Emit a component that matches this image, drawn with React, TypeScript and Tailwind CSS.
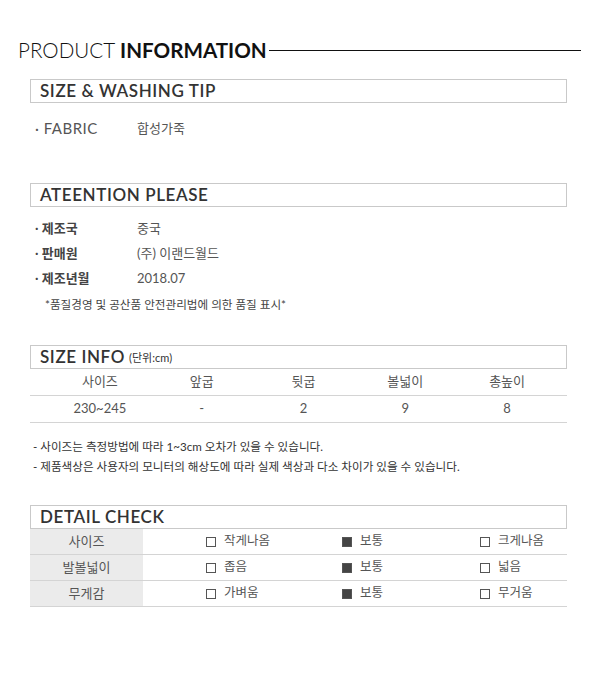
import React from "react";

const font = { fontFamily: 'Lato, "Noto Sans CJK KR", sans-serif' };

function BoxTitle({ children, className = "" }: { children: React.ReactNode; className?: string }) {
  return (
    <div className={"h-[24px] border border-[#c9c9c9] pl-[9px] flex items-center text-[17px] font-semibold text-[#333] tracking-[0.6px] " + className}>
      {children}
    </div>
  );
}

function Check({ on }: { on?: boolean }) {
  return (
    <span className={"inline-block w-[10px] h-[10px] border border-[#555] " + (on ? "bg-[#444]" : "bg-white")} />
  );
}

export default function App() {
  const detail = [
    { label: "사이즈", opts: ["작게나옴", "보통", "크게나옴"] },
    { label: "발볼넓이", opts: ["좁음", "보통", "넓음"] },
    { label: "무게감", opts: ["가벼움", "보통", "무거움"] },
  ];
  return (
    <div className="w-[600px] h-[676px] bg-white" style={font}>
      <div className="pt-[38px] flex items-center pl-[18px] pr-[19px] h-[62px]">
        <div className="text-[20.6px] leading-[24px] text-[#111] tracking-[0px] whitespace-nowrap">
          <span className="font-light">PRODUCT </span>
          <span className="font-bold">INFORMATION</span>
        </div>
        <div className="flex-1 h-px bg-[#111] ml-[2px]" />
      </div>

      <div className="pl-[30px] pr-[33px]">
        <BoxTitle className="mt-[17px]">SIZE &amp; WASHING TIP</BoxTitle>
        <div className="mt-[13px] h-[25px] flex items-center text-[#555]">
          <div className="w-[107px] pl-[5px] text-[15px] tracking-[0.5px]">· FABRIC</div>
          <div className="text-[13px]">합성가죽</div>
        </div>

        <BoxTitle className="mt-[42px]">ATEENTION PLEASE</BoxTitle>
        <div className="mt-[9px]">
          {[
            ["제조국", "중국"],
            ["판매원", "(주) 이랜드월드"],
            ["제조년월", "2018.07"],
          ].map(([k, v]) => (
            <div key={k} className="h-[25px] flex items-center text-[13px]">
              <div className="w-[107px] pl-[5px] text-[#444] font-semibold">· {k}</div>
              <div className="text-[#555]">{v}</div>
            </div>
          ))}
        </div>
        <div className="mt-[4px] h-[20px] flex items-center pl-[15px] text-[11.6px] text-[#444]">
          *품질경영 및 공산품 안전관리법에 의한 품질 표시*
        </div>

        <BoxTitle className="mt-[30px]">
          <span className="text-[17px]">SIZE INFO</span>
          <span className="text-[11px] font-normal tracking-normal ml-[4px] mt-[3px]">(단위:cm)</span>
        </BoxTitle>
        <div className="grid grid-cols-5 pl-[19px] pr-[9px] h-[27px] items-center text-[13px] text-[#555] text-center border-b border-[#d4d4d4]">
          <div>사이즈</div>
          <div>앞굽</div>
          <div>뒷굽</div>
          <div>볼넓이</div>
          <div>총높이</div>
        </div>
        <div className="grid grid-cols-5 pl-[19px] pr-[9px] h-[27px] items-center text-[13px] text-[#555] text-center border-b border-[#d4d4d4]">
          <div>230~245</div>
          <div>-</div>
          <div>2</div>
          <div>9</div>
          <div>8</div>
        </div>

        <div className="mt-[14px] pl-[3px] text-[11.6px] text-[#333]">
          <div className="h-[20px] flex items-center">- 사이즈는 측정방법에 따라 1~3cm 오차가 있을 수 있습니다.</div>
          <div className="h-[20px] flex items-center">- 제품색상은 사용자의 모니터의 해상도에 따라 실제 색상과 다소 차이가 있을 수 있습니다.</div>
        </div>

        <BoxTitle className="mt-[28px]">DETAIL CHECK</BoxTitle>
        {detail.map((row) => (
          <div key={row.label} className="flex h-[26px] border-b border-[#d4d4d4]">
            <div className="w-[113px] bg-[#ebebeb] flex items-center justify-center text-[13px] text-[#555]">
              {row.label}
            </div>
            <div className="flex-1 flex items-center pl-[63px] text-[12.5px] text-[#555]">
              {row.opts.map((o, i) => (
                <div key={i} className={"flex items-center gap-[8px] " + (i === 0 ? "w-[136px]" : i === 1 ? "w-[138px]" : "")}>
                  <Check on={i === 1} />
                  <span>{o}</span>
                </div>
              ))}
            </div>
          </div>
        ))}
      </div>
    </div>
  );
}
